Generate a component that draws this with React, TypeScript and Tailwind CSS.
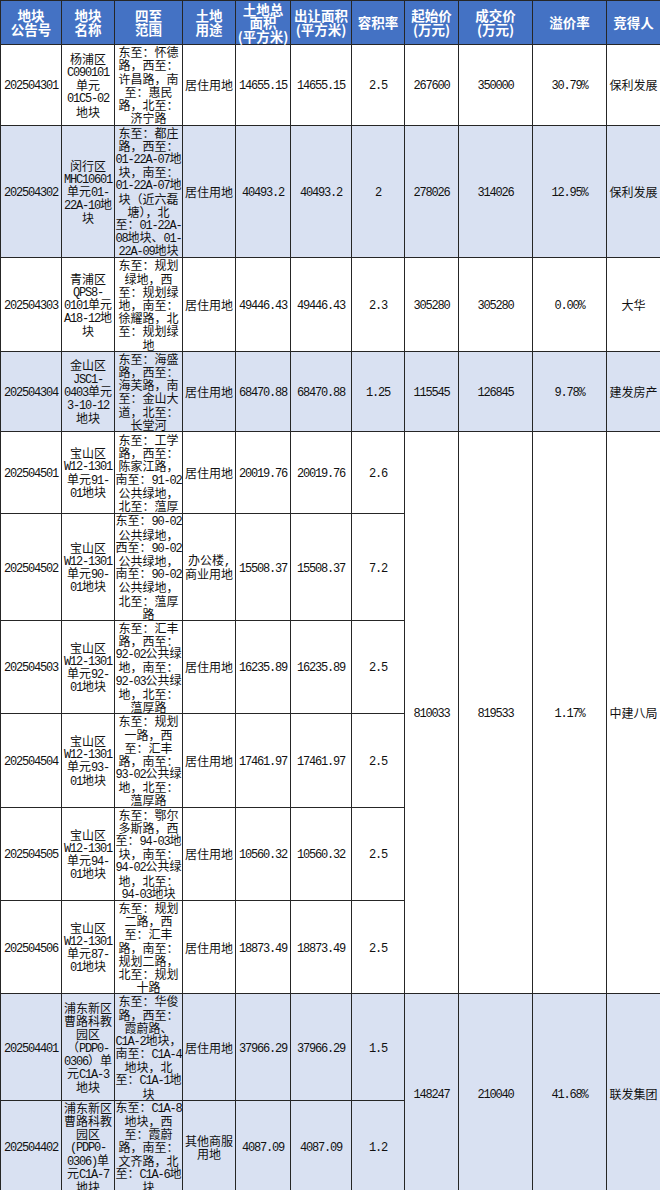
import type { ReactNode } from "react";

type Price = {
  start: string;
  deal: string;
  premium: string;
  winner: string;
  span: number;
};

type Row = {
  id: string;
  name: string[];
  range: string[];
  use: string[];
  area: string;
  far: string;
  h: string;
  blue?: boolean;
  price?: Price;
};

const ROWS: Row[] = [
  {
    id: "202504301",
    name: ["杨浦区", "C090101", "单元", "01C5-02", "地块"],
    range: ["东至：怀德", "路，西至：", "许昌路，南", "至：惠民", "路，北至：", "济宁路"],
    use: ["居住用地"],
    area: "14655.15",
    far: "2.5",
    h: "h-[80.5px]",
    price: { start: "267600", deal: "350000", premium: "30.79%", winner: "保利发展", span: 1 },
  },
  {
    id: "202504302",
    name: ["闵行区", "MHC10601", "单元01-", "22A-10地", "块"],
    range: [
      "东至：都庄",
      "路，西至：",
      "01-22A-07地",
      "块，南至：",
      "01-22A-07地",
      "块（近六磊",
      "塘），北",
      "至：01-22A-",
      "08地块、01-",
      "22A-09地块",
    ],
    use: ["居住用地"],
    area: "40493.2",
    far: "2",
    h: "h-[131.5px]",
    blue: true,
    price: { start: "278026", deal: "314026", premium: "12.95%", winner: "保利发展", span: 1 },
  },
  {
    id: "202504303",
    name: ["青浦区", "QPS8-", "0101单元", "A18-12地", "块"],
    range: ["东至：规划", "绿地，西", "至：规划绿", "地，南至：", "徐耀路，北", "至：规划绿", "地"],
    use: ["居住用地"],
    area: "49446.43",
    far: "2.3",
    h: "h-[91.5px]",
    price: { start: "305280", deal: "305280", premium: "0.00%", winner: "大华", span: 1 },
  },
  {
    id: "202504304",
    name: ["金山区", "JSC1-", "0403单元", "3-10-12", "地块"],
    range: ["东至：海盛", "路，西至：", "海芙路，南", "至：金山大", "道，北至：", "长堂河"],
    use: ["居住用地"],
    area: "68470.88",
    far: "1.25",
    h: "h-[79.5px]",
    blue: true,
    price: { start: "115545", deal: "126845", premium: "9.78%", winner: "建发房产", span: 1 },
  },
  {
    id: "202504501",
    name: ["宝山区", "W12-1301", "单元91-", "01地块"],
    range: ["东至：工学", "路，西至：", "陈家江路，", "南至：91-02", "公共绿地，", "北至：蕰厚"],
    use: ["居住用地"],
    area: "20019.76",
    far: "2.6",
    h: "h-[82.5px]",
    price: { start: "810033", deal: "819533", premium: "1.17%", winner: "中建八局", span: 6 },
  },
  {
    id: "202504502",
    name: ["宝山区", "W12-1301", "单元90-", "01地块"],
    range: [
      "东至：90-02",
      "公共绿地，",
      "西至：90-02",
      "公共绿地，",
      "南至：90-02",
      "公共绿地，",
      "北至：蕰厚",
      "路",
    ],
    use: ["办公楼,", "商业用地"],
    area: "15508.37",
    far: "7.2",
    h: "h-[105.5px]",
  },
  {
    id: "202504503",
    name: ["宝山区", "W12-1301", "单元92-", "01地块"],
    range: ["东至：汇丰", "路，西至：", "92-02公共绿", "地，南至：", "92-03公共绿", "地，北至：", "蕰厚路"],
    use: ["居住用地"],
    area: "16235.89",
    far: "2.5",
    h: "h-[91.5px]",
  },
  {
    id: "202504504",
    name: ["宝山区", "W12-1301", "单元93-", "01地块"],
    range: ["东至：规划", "一路，西", "至：汇丰", "路，南至：", "93-02公共绿", "地，北至：", "蕰厚路"],
    use: ["居住用地"],
    area: "17461.97",
    far: "2.5",
    h: "h-[93.5px]",
  },
  {
    id: "202504505",
    name: ["宝山区", "W12-1301", "单元94-", "01地块"],
    range: ["东至：鄂尔", "多斯路，西", "至：94-03地", "块，南至：", "94-02公共绿", "地，北至：", "94-03地块"],
    use: ["居住用地"],
    area: "10560.32",
    far: "2.5",
    h: "h-[91.5px]",
  },
  {
    id: "202504506",
    name: ["宝山区", "W12-1301", "单元87-", "01地块"],
    range: ["东至：规划", "二路，西", "至：汇丰", "路，南至：", "规划二路，", "北至：规划", "十路"],
    use: ["居住用地"],
    area: "18873.49",
    far: "2.5",
    h: "h-[92px]",
  },
  {
    id: "202504401",
    name: ["浦东新区", "曹路科教", "园区", "（PDP0-", "0306）单", "元C1A-3", "地块"],
    range: [
      "东至：华俊",
      "路，西至：",
      "霞蔚路、",
      "C1A-2地块，",
      "南至：C1A-4",
      "地块，北",
      "至：C1A-1地",
      "块",
    ],
    use: ["居住用地"],
    area: "37966.29",
    far: "1.5",
    h: "h-[106px]",
    blue: true,
    price: { start: "148247", deal: "210040", premium: "41.68%", winner: "联发集团", span: 2 },
  },
  {
    id: "202504402",
    name: ["浦东新区", "曹路科教", "园区", "(PDP0-", "0306)单", "元C1A-7", "地块"],
    range: ["东至：C1A-8", "地块，西", "至：霞蔚", "路，南至：", "文齐路，北", "至：C1A-6地", "块"],
    use: ["其他商服", "用地"],
    area: "4087.09",
    far: "1.2",
    h: "h-[92.5px]",
    blue: true,
  },
];

const HEADERS: string[][] = [
  ["地块", "公告号"],
  ["地块", "名称"],
  ["四至", "范围"],
  ["土地", "用途"],
  ["土地总", "面积", "(平方米)"],
  ["出让面积", "(平方米)"],
  ["容积率"],
  ["起始价", "(万元)"],
  ["成交价", "(万元)"],
  ["溢价率"],
  ["竞得人"],
];

const COLS = [
  "w-[61px]",
  "w-[53px]",
  "w-[68px]",
  "w-[53px]",
  "w-[55px]",
  "w-[61px]",
  "w-[53px]",
  "w-[54px]",
  "w-[74px]",
  "w-[74px]",
  "w-[54px]",
];

// latin / digit runs get a thin mono face, CJK stays on Noto
function Txt({ s }: { s: string }) {
  const parts = s.split(/([\x21-\x7e]+)/);
  return (
    <>
      {parts.map((p, i) =>
        /[\x21-\x7e]/.test(p) ? (
          <span key={i} className="font-['Liberation_Mono',monospace] leading-none tracking-[-1.2px]">
            {p}
          </span>
        ) : (
          p
        )
      )}
    </>
  );
}

function Lines({ lines }: { lines: string[] }) {
  return (
    <>
      {lines.map((l, i) => (
        <div key={i} className="flex h-[13.2px] items-center justify-center whitespace-nowrap">
          <span>
            <Txt s={l} />
          </span>
        </div>
      ))}
    </>
  );
}

function Cell({ children, rowSpan, className = "" }: { children: ReactNode; rowSpan?: number; className?: string }) {
  return (
    <td
      rowSpan={rowSpan}
      className={`border border-[#262626] p-0 text-center align-middle leading-[13px] ${className}`}
    >
      {children}
    </td>
  );
}

export default function App() {
  return (
    <div className="h-[1190px] w-[660px] overflow-hidden bg-white">
      <table className="w-[660px] table-fixed border-collapse font-['Noto_Sans_CJK_SC',sans-serif] text-[12px] text-[#111]">
        <colgroup>
          {COLS.map((c, i) => (
            <col key={i} className={c} />
          ))}
        </colgroup>
        <thead>
          <tr className="h-[44px]">
            {HEADERS.map((h, i) => (
              <th
                key={i}
                className="border border-[#262626] bg-[#4472C4] p-0 text-center align-middle text-[13.5px] font-bold leading-[13px] text-white"
              >
                {h.map((l, j) => (
                  <div key={j} className="flex h-[13.5px] items-center justify-center whitespace-nowrap">
                    {l}
                  </div>
                ))}
              </th>
            ))}
          </tr>
        </thead>
        <tbody>
          {ROWS.map((r) => {
            const bg = r.blue ? "bg-[#D9E1F2]" : "bg-white";
            return (
              <tr key={r.id} className={`${r.h} ${bg}`}>
                <Cell>
                  <Txt s={r.id} />
                </Cell>
                <Cell>
                  <Lines lines={r.name} />
                </Cell>
                <Cell>
                  <Lines lines={r.range} />
                </Cell>
                <Cell>
                  <Lines lines={r.use} />
                </Cell>
                <Cell>
                  <Txt s={r.area} />
                </Cell>
                <Cell>
                  <Txt s={r.area} />
                </Cell>
                <Cell>
                  <Txt s={r.far} />
                </Cell>
                {r.price && (
                  <>
                    <Cell rowSpan={r.price.span}>
                      <Txt s={r.price.start} />
                    </Cell>
                    <Cell rowSpan={r.price.span}>
                      <Txt s={r.price.deal} />
                    </Cell>
                    <Cell rowSpan={r.price.span}>
                      <Txt s={r.price.premium} />
                    </Cell>
                    <Cell rowSpan={r.price.span}>{r.price.winner}</Cell>
                  </>
                )}
              </tr>
            );
          })}
        </tbody>
      </table>
    </div>
  );
}
